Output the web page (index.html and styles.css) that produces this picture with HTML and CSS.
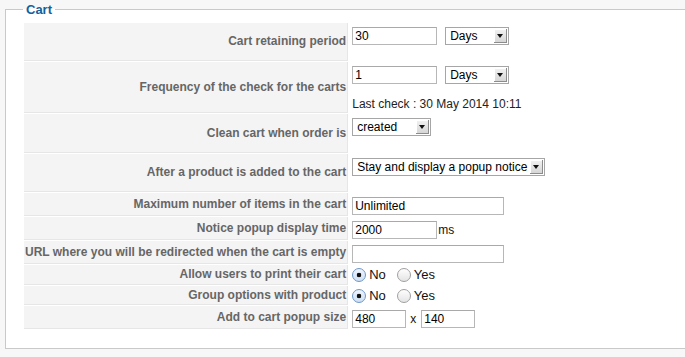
FILE: index.html
```html
<!DOCTYPE html>
<html lang="en">
<head>
    <meta charset="UTF-8">
    <title>Cart configuration</title>
    <link rel="stylesheet" href="styles.css">
</head>
<body>
    <div class="page">
        <fieldset class="adminform">
            <legend>Cart</legend>
            <table class="admintable">
                <tr class="row-tall">
                    <td class="key">Cart retaining period</td>
                    <td class="value">
                        <div class="field">
                            <input type="text" class="inputbox input-small" value="30">
                            <span class="select-wrap select-days">
                                <select class="select"><option>Days</option></select>
                                <span class="select-arrow"></span>
                            </span>
                        </div>
                    </td>
                </tr>
                <tr class="row-check">
                    <td class="key">Frequency of the check for the carts</td>
                    <td class="value">
                        <div class="field">
                            <input type="text" class="inputbox input-small" value="1">
                            <span class="select-wrap select-days">
                                <select class="select"><option>Days</option></select>
                                <span class="select-arrow"></span>
                            </span>
                        </div>
                        <div class="last-check">Last check : 30 May 2014 10:11</div>
                    </td>
                </tr>
                <tr class="row-tall row-tall-b">
                    <td class="key">Clean cart when order is</td>
                    <td class="value">
                        <div class="field">
                            <span class="select-wrap select-status">
                                <select class="select"><option>created</option></select>
                                <span class="select-arrow"></span>
                            </span>
                        </div>
                    </td>
                </tr>
                <tr class="row-tall">
                    <td class="key">After a product is added to the cart</td>
                    <td class="value">
                        <div class="field">
                            <span class="select-wrap select-popup">
                                <select class="select"><option>Stay and display a popup notice</option></select>
                                <span class="select-arrow"></span>
                            </span>
                        </div>
                    </td>
                </tr>
                <tr>
                    <td class="key">Maximum number of items in the cart</td>
                    <td class="value">
                        <div class="field">
                            <input type="text" class="inputbox input-wide" value="Unlimited">
                        </div>
                    </td>
                </tr>
                <tr>
                    <td class="key">Notice popup display time</td>
                    <td class="value">
                        <div class="field">
                            <input type="text" class="inputbox input-small" value="2000">
                            <span class="unit">ms</span>
                        </div>
                    </td>
                </tr>
                <tr>
                    <td class="key">URL where you will be redirected when the cart is empty</td>
                    <td class="value">
                        <div class="field">
                            <input type="text" class="inputbox input-wide" value="">
                        </div>
                    </td>
                </tr>
                <tr class="row-radio">
                    <td class="key">Allow users to print their cart</td>
                    <td class="value value-radio">
                        <div class="field radios">
                            <input type="radio" class="radio" name="print_cart" id="print_no" checked>
                            <label for="print_no">No</label>
                            <input type="radio" class="radio radio-next" name="print_cart" id="print_yes">
                            <label for="print_yes">Yes</label>
                        </div>
                    </td>
                </tr>
                <tr class="row-radio-b">
                    <td class="key">Group options with product</td>
                    <td class="value value-radio">
                        <div class="field radios">
                            <input type="radio" class="radio" name="group_options" id="group_no" checked>
                            <label for="group_no">No</label>
                            <input type="radio" class="radio radio-next" name="group_options" id="group_yes">
                            <label for="group_yes">Yes</label>
                        </div>
                    </td>
                </tr>
                <tr class="row-size">
                    <td class="key">Add to cart popup size</td>
                    <td class="value">
                        <div class="field">
                            <input type="text" class="inputbox input-tiny" value="480">
                            <span class="times">x</span>
                            <input type="text" class="inputbox input-tiny" value="140">
                        </div>
                    </td>
                </tr>
            </table>
        </fieldset>
    </div>
</body>
</html>
```

FILE: styles.css
```css
html, body {
    margin: 0;
    background: #f7f7f7;
    overflow: hidden;
}
body {
    font-family: "Liberation Sans", Arial, sans-serif;
    font-size: 12px;
    color: #222;
}
.page {
    padding: 2px 0 0 5px;
}
.adminform {
    box-sizing: border-box;
    width: 100%;
    min-width: 0;
    margin: 0;
    padding: 5px 0 18px 17px;
    border: 1px solid #c9c9c9;
    border-right: 0;
    background: #fff;
}
.adminform legend {
    padding: 0 3px;
    font-size: 13px;
    line-height: 15px;
    font-weight: bold;
    color: #17609b;
}
.admintable {
    border-collapse: separate;
    border-spacing: 1px;
}
.admintable td {
    padding: 0;
}
.key {
    width: 321px;
    padding: 0 1px !important;
    background: #f4f4f4;
    border-bottom: 1px solid #e6e6e6;
    border-right: 1px solid #e6e6e6;
    text-align: right;
    vertical-align: middle;
    white-space: nowrap;
    font-weight: bold;
    color: #666;
    line-height: 15px;
}
.value {
    width: 300px;
    vertical-align: top;
    padding: 4px 0 1px 3px !important;
}
.value-radio {
    padding-top: 3px !important;
}
.row-tall {
    height: 38px;
}
.row-tall-b {
    height: 39px;
}
.row-check {
    height: 51px;
}
.row-radio {
    height: 20px;
}
.row-radio-b {
    height: 19px;
}
.row-size {
    height: 22px;
}
.field {
    display: flex;
    align-items: center;
}
.inputbox {
    box-sizing: border-box;
    height: 18px;
    margin: 0;
    padding: 0 2px;
    border: 1px solid #b7b7b7;
    border-top-color: #a9a9a9;
    background: #fff;
    font-family: "Liberation Sans", Arial, sans-serif;
    font-size: 12px;
    color: #000;
    outline: none;
}
.input-small {
    width: 85px;
}
.input-wide {
    width: 152px;
}
.input-tiny {
    width: 54px;
}
.unit {
    margin-left: 1px;
    font-size: 12px;
    color: #111;
}
.times {
    margin: 0 5px 0 4px;
    font-size: 12px;
    color: #111;
}
.select-wrap {
    position: relative;
    display: inline-block;
    height: 18px;
}
.input-small + .select-wrap {
    margin-left: 8px;
}
.select-days {
    width: 64px;
}
.select-status {
    width: 79px;
}
.select-popup {
    width: 193px;
}
.select {
    appearance: none;
    -webkit-appearance: none;
    box-sizing: border-box;
    width: 100%;
    height: 18px;
    margin: 0;
    padding: 0 14px 0 4px;
    border: 1px solid #a6a6a6;
    border-radius: 0;
    background: #fff;
    font-family: "Liberation Sans", Arial, sans-serif;
    font-size: 12px;
    line-height: 16px;
    color: #000;
}
.select-arrow {
    position: absolute;
    top: 2px;
    right: 2px;
    width: 12px;
    height: 13px;
    background: linear-gradient(#f2f2f2, #d6d6d6);
    border-right: 1px solid #8c8c8c;
    border-bottom: 1px solid #8c8c8c;
    box-shadow: inset 1px 1px 0 #fff;
    pointer-events: none;
}
.select-arrow::after {
    content: "";
    position: absolute;
    left: 3px;
    top: 5px;
    border-left: 3px solid transparent;
    border-right: 3px solid transparent;
    border-top: 4px solid #111;
}
.last-check {
    margin-top: 13px;
    line-height: 14px;
    color: #222;
}
.radios label {
    margin-left: 3px;
    font-size: 13px;
    line-height: 14px;
    color: #111;
}
.radio {
    appearance: none;
    -webkit-appearance: none;
    box-sizing: border-box;
    width: 14px;
    height: 14px;
    margin: 0;
    border: 1px solid #a0a0a0;
    border-radius: 50%;
    background: linear-gradient(#fefefe, #e4e4e4);
}
.radio:checked {
    border-color: #6f97c8;
    background: radial-gradient(circle, #111 0 2px, transparent 2.6px), linear-gradient(#eef4fc, #cddff4);
}
.radio-next {
    margin-left: 11px;
}
```
